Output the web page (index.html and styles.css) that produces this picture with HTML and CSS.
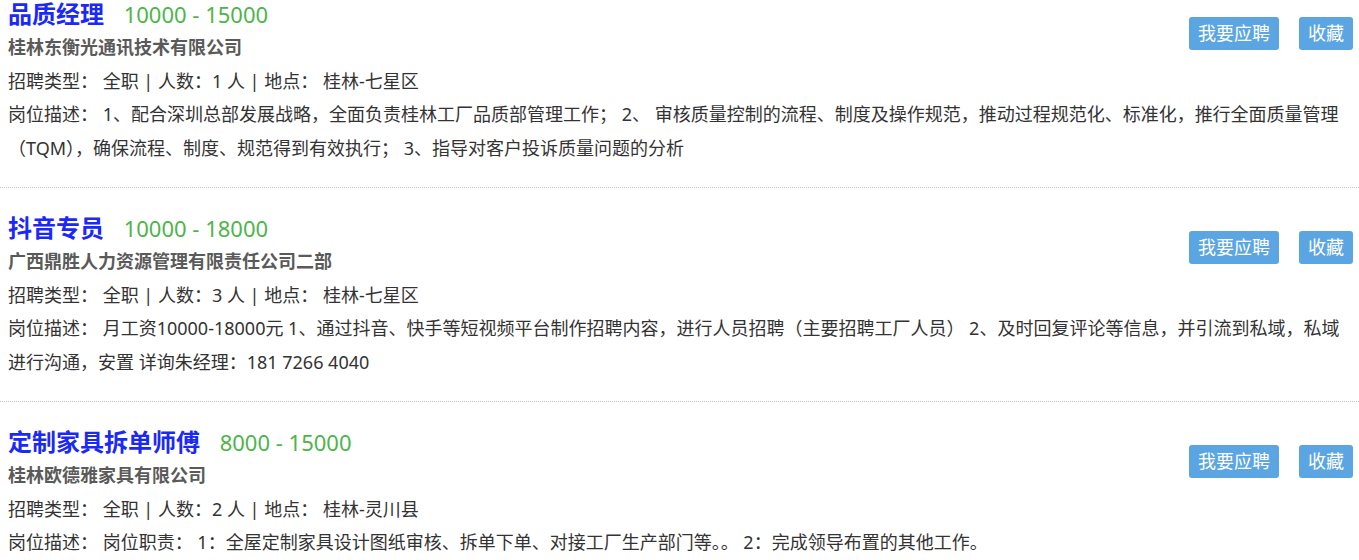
FILE: index.html
```html
<!DOCTYPE html>
<html lang="zh-CN">
<head>
<meta charset="utf-8">
<title>职位列表</title>
<link rel="stylesheet" href="styles.css">
</head>
<body>
<div class="job-list">
  <div class="job">
    <div class="actions">
      <a class="btn btn-apply">我要应聘</a>
      <a class="btn btn-fav">收藏</a>
    </div>
    <div class="job-head">
      <span class="job-title">品质经理</span>
      <span class="salary">10000 - 15000</span>
    </div>
    <div class="company">桂林东衡光通讯技术有限公司</div>
    <div class="line">招聘类型： 全职 | 人数：1 人 | 地点： 桂林-七星区</div>
    <div class="line">岗位描述： 1、配合深圳总部发展战略，全面负责桂林工厂品质部管理工作； 2、 审核质量控制的流程、制度及操作规范，推动过程规范化、标准化，推行全面质量管理（TQM），确保流程、制度、规范得到有效执行； 3、指导对客户投诉质量问题的分析</div>
  </div>
  <div class="job">
    <div class="actions">
      <a class="btn btn-apply">我要应聘</a>
      <a class="btn btn-fav">收藏</a>
    </div>
    <div class="job-head">
      <span class="job-title">抖音专员</span>
      <span class="salary">10000 - 18000</span>
    </div>
    <div class="company">广西鼎胜人力资源管理有限责任公司二部</div>
    <div class="line">招聘类型： 全职 | 人数：3 人 | 地点： 桂林-七星区</div>
    <div class="line">岗位描述： 月工资10000-18000元 1、通过抖音、快手等短视频平台制作招聘内容，进行人员招聘（主要招聘工厂人员） 2、及时回复评论等信息，并引流到私域，私域进行沟通，安置 详询朱经理：181 7266 4040</div>
  </div>
  <div class="job">
    <div class="actions">
      <a class="btn btn-apply">我要应聘</a>
      <a class="btn btn-fav">收藏</a>
    </div>
    <div class="job-head">
      <span class="job-title">定制家具拆单师傅</span>
      <span class="salary">8000 - 15000</span>
    </div>
    <div class="company">桂林欧德雅家具有限公司</div>
    <div class="line">招聘类型： 全职 | 人数：2 人 | 地点： 桂林-灵川县</div>
    <div class="line">岗位描述： 岗位职责： 1：全屋定制家具设计图纸审核、拆单下单、对接工厂生产部门等。。 2：完成领导布置的其他工作。</div>
  </div>
</div>
</body>
</html>
```

FILE: styles.css
```css
html, body {
  margin: 0;
  padding: 0;
  background: #ffffff;
}

body {
  font-family: "Noto Sans", "Noto Sans CJK SC", sans-serif;
  font-size: 18px;
  color: #333333;
  overflow: hidden;
}

.job {
  padding: 26px 6px 22px 8px;
  border-bottom: 1px dotted #c8c8c8;
}

.job:first-child {
  padding-top: 0;
}

.actions {
  float: right;
  display: flex;
  gap: 20px;
  margin-top: 17px;
}

.btn {
  display: block;
  height: 33px;
  line-height: 33px;
  padding: 0 9px;
  background: #5ca5e3;
  color: #ffffff;
  font-size: 18px;
  border-radius: 3px;
  cursor: pointer;
}

.job-head {
  height: 28px;
  line-height: 28px;
  margin-bottom: 3px;
  white-space: nowrap;
}

.job-title {
  font-size: 24px;
  font-weight: bold;
  color: #1a28f8;
}

.salary {
  font-size: 22px;
  color: #4cb54a;
  margin-left: 15px;
}

.company {
  font-weight: bold;
  color: #5a5a5a;
  line-height: 33.5px;
}

.line {
  line-height: 33.5px;
}
```
